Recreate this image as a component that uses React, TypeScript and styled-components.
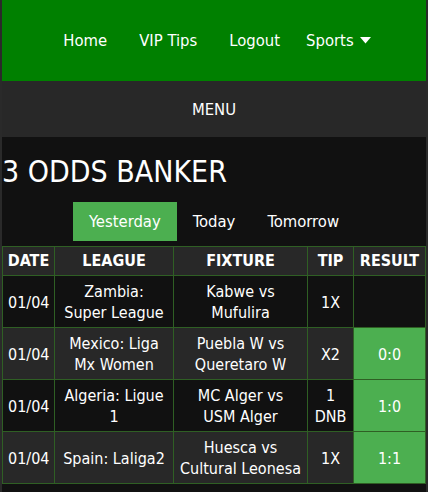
import styled, { createGlobalStyle } from "styled-components";

const GlobalStyle = createGlobalStyle`
  html, body {
    margin: 0;
    padding: 0;
    background-color: #2a2a2a;
  }
  body {
    font-family: "DejaVu Sans Condensed", "DejaVu Sans", sans-serif;
    color: #fff;
  }
`;

const Page = styled.div`
  margin: 0 2px;
  min-height: 492px;
  background-color: #111;
`;

const TopNav = styled.nav`
  background-color: #008000;
  height: 81px;
  display: flex;
  align-items: center;
  justify-content: center;
`;

const NavLink = styled.a<{ $dropdown?: boolean }>`
  color: #fff;
  text-decoration: none;
  font-size: 16.5px;
  padding: ${(p) => (p.$dropdown ? "0 10px" : "0 16px")};
  display: flex;
  align-items: center;
  gap: 6px;
`;

const Caret = styled.svg`
  width: 11px;
  height: 7px;
  fill: #fff;
`;

const MenuBar = styled.div`
  background-color: #282828;
  height: 56px;
  display: flex;
  align-items: center;
  justify-content: center;
  font-size: 16.5px;
`;

const Title = styled.h1`
  margin: 0;
  padding: 17px 0 0 0;
  font-size: 30px;
  font-weight: normal;
  line-height: 36px;
`;

const Tabs = styled.div`
  display: flex;
  justify-content: center;
  margin-top: 12px;
`;

const Tab = styled.button<{ $active?: boolean }>`
  border: none;
  font-family: inherit;
  font-size: 16.5px;
  color: #fff;
  height: 39px;
  padding: 0 16px;
  background-color: ${(p) => (p.$active ? "#4caf50" : "transparent")};
`;

const Table = styled.table`
  margin-top: 5px;
  width: 100%;
  border-collapse: collapse;
  table-layout: fixed;
  border: 1px solid #2f5f24;
  font-size: 16px;
`;

const Th = styled.th`
  border: 1px solid #2f5f24;
  background-color: #282828;
  font-weight: bold;
  padding: 3px 2px;
  line-height: 22px;
`;

const Row = styled.tr<{ $shade?: boolean }>`
  background-color: ${(p) => (p.$shade ? "#282828" : "#111")};
`;

const Td = styled.td<{ $win?: boolean }>`
  border: 1px solid #2f5f24;
  text-align: center;
  padding: 5px 5px 4px;
  line-height: 21px;
  background-color: ${(p) => (p.$win ? "#4caf50" : "inherit")};
`;

const tips = [
  { date: "01/04", league: "Zambia: Super\u00a0League", fixture: "Kabwe vs Mufulira", tip: "1X", result: "" },
  { date: "01/04", league: "Mexico: Liga Mx Women", fixture: "Puebla W vs Queretaro W", tip: "X2", result: "0:0" },
  { date: "01/04", league: "Algeria: Ligue 1", fixture: "MC Alger vs USM\u00a0Alger", tip: "1 DNB", result: "1:0" },
  { date: "01/04", league: "Spain: Laliga2", fixture: "Huesca vs Cultural Leonesa", tip: "1X", result: "1:1" },
];

export default function App() {
  return (
    <Page>
      <GlobalStyle />
      <TopNav>
        <NavLink href="#">Home</NavLink>
        <NavLink href="#">VIP Tips</NavLink>
        <NavLink href="#">Logout</NavLink>
        <NavLink href="#" $dropdown>
          Sports
          <Caret viewBox="0 0 11 7">
            <path d="M0 0 L11 0 L5.5 6.5 Z" />
          </Caret>
        </NavLink>
      </TopNav>
      <MenuBar>MENU</MenuBar>
      <Title>3 ODDS BANKER</Title>
      <Tabs>
        <Tab $active>Yesterday</Tab>
        <Tab>Today</Tab>
        <Tab>Tomorrow</Tab>
      </Tabs>
      <Table>
        <colgroup>
          <col style={{ width: 52 }} />
          <col style={{ width: 119 }} />
          <col style={{ width: 134 }} />
          <col style={{ width: 46 }} />
          <col />
        </colgroup>
        <thead>
          <tr>
            <Th>DATE</Th>
            <Th>LEAGUE</Th>
            <Th>FIXTURE</Th>
            <Th>TIP</Th>
            <Th>RESULT</Th>
          </tr>
        </thead>
        <tbody>
          {tips.map((t, i) => (
            <Row key={i} $shade={i % 2 === 1}>
              <Td>{t.date}</Td>
              <Td>{t.league}</Td>
              <Td>{t.fixture}</Td>
              <Td>{t.tip}</Td>
              <Td $win={t.result !== ""}>{t.result}</Td>
            </Row>
          ))}
        </tbody>
      </Table>
    </Page>
  );
}
